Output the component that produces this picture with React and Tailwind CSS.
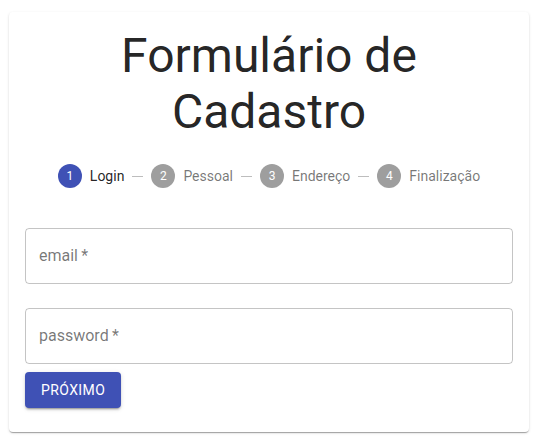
import React from "react";

const steps = ["Login", "Pessoal", "Endereço", "Finalização"];

function Field({ label }) {
  return (
    <div className="mt-4 mb-2 h-14 rounded border border-[rgba(0,0,0,0.23)] flex items-center px-[13px]">
      <span className="text-base text-[rgba(0,0,0,0.54)]">{label}&thinsp;*</span>
    </div>
  );
}

export default function App() {
  return (
    <div className="min-h-screen bg-white pt-3 pl-[9px] pr-[12px] font-['Roboto',sans-serif]">
      <div className="w-[520px] rounded bg-white px-4 pt-4 pb-6 shadow-[0px_2px_1px_-1px_rgba(0,0,0,0.2),0px_1px_1px_0px_rgba(0,0,0,0.14),0px_1px_3px_0px_rgba(0,0,0,0.12)]">
        <h1 className="text-center text-[48px] leading-[56px] font-normal text-[rgba(0,0,0,0.87)]">
          Formulário de
          <br />
          Cadastro
        </h1>

        {/* Stepper */}
        <div className="flex justify-center items-center py-6">
          {steps.map((s, i) => (
            <React.Fragment key={s}>
              {i > 0 && <div className="w-[11px] border-t border-[#bdbdbd]" />}
              <div className="flex items-center px-2">
                <div
                  className={`w-6 h-6 rounded-full flex items-center justify-center text-xs text-white ${
                    i === 0 ? "bg-[#3f51b5]" : "bg-[#9e9e9e]"
                  }`}
                >
                  {i + 1}
                </div>
                <span
                  className={`pl-2 text-sm ${
                    i === 0 ? "text-[rgba(0,0,0,0.87)]" : "text-[rgba(0,0,0,0.54)]"
                  }`}
                >
                  {s}
                </span>
              </div>
            </React.Fragment>
          ))}
        </div>

        <div className="flex flex-col items-stretch">
          <Field label="email" />
          <Field label="password" />
          <div>
            <button className="h-9 px-4 rounded bg-[#3f51b5] text-white text-sm font-normal uppercase tracking-[0.02857em] shadow-[0px_3px_1px_-2px_rgba(0,0,0,0.2),0px_2px_2px_0px_rgba(0,0,0,0.14),0px_1px_5px_0px_rgba(0,0,0,0.12)]">
              Próximo
            </button>
          </div>
        </div>
      </div>
    </div>
  );
}
